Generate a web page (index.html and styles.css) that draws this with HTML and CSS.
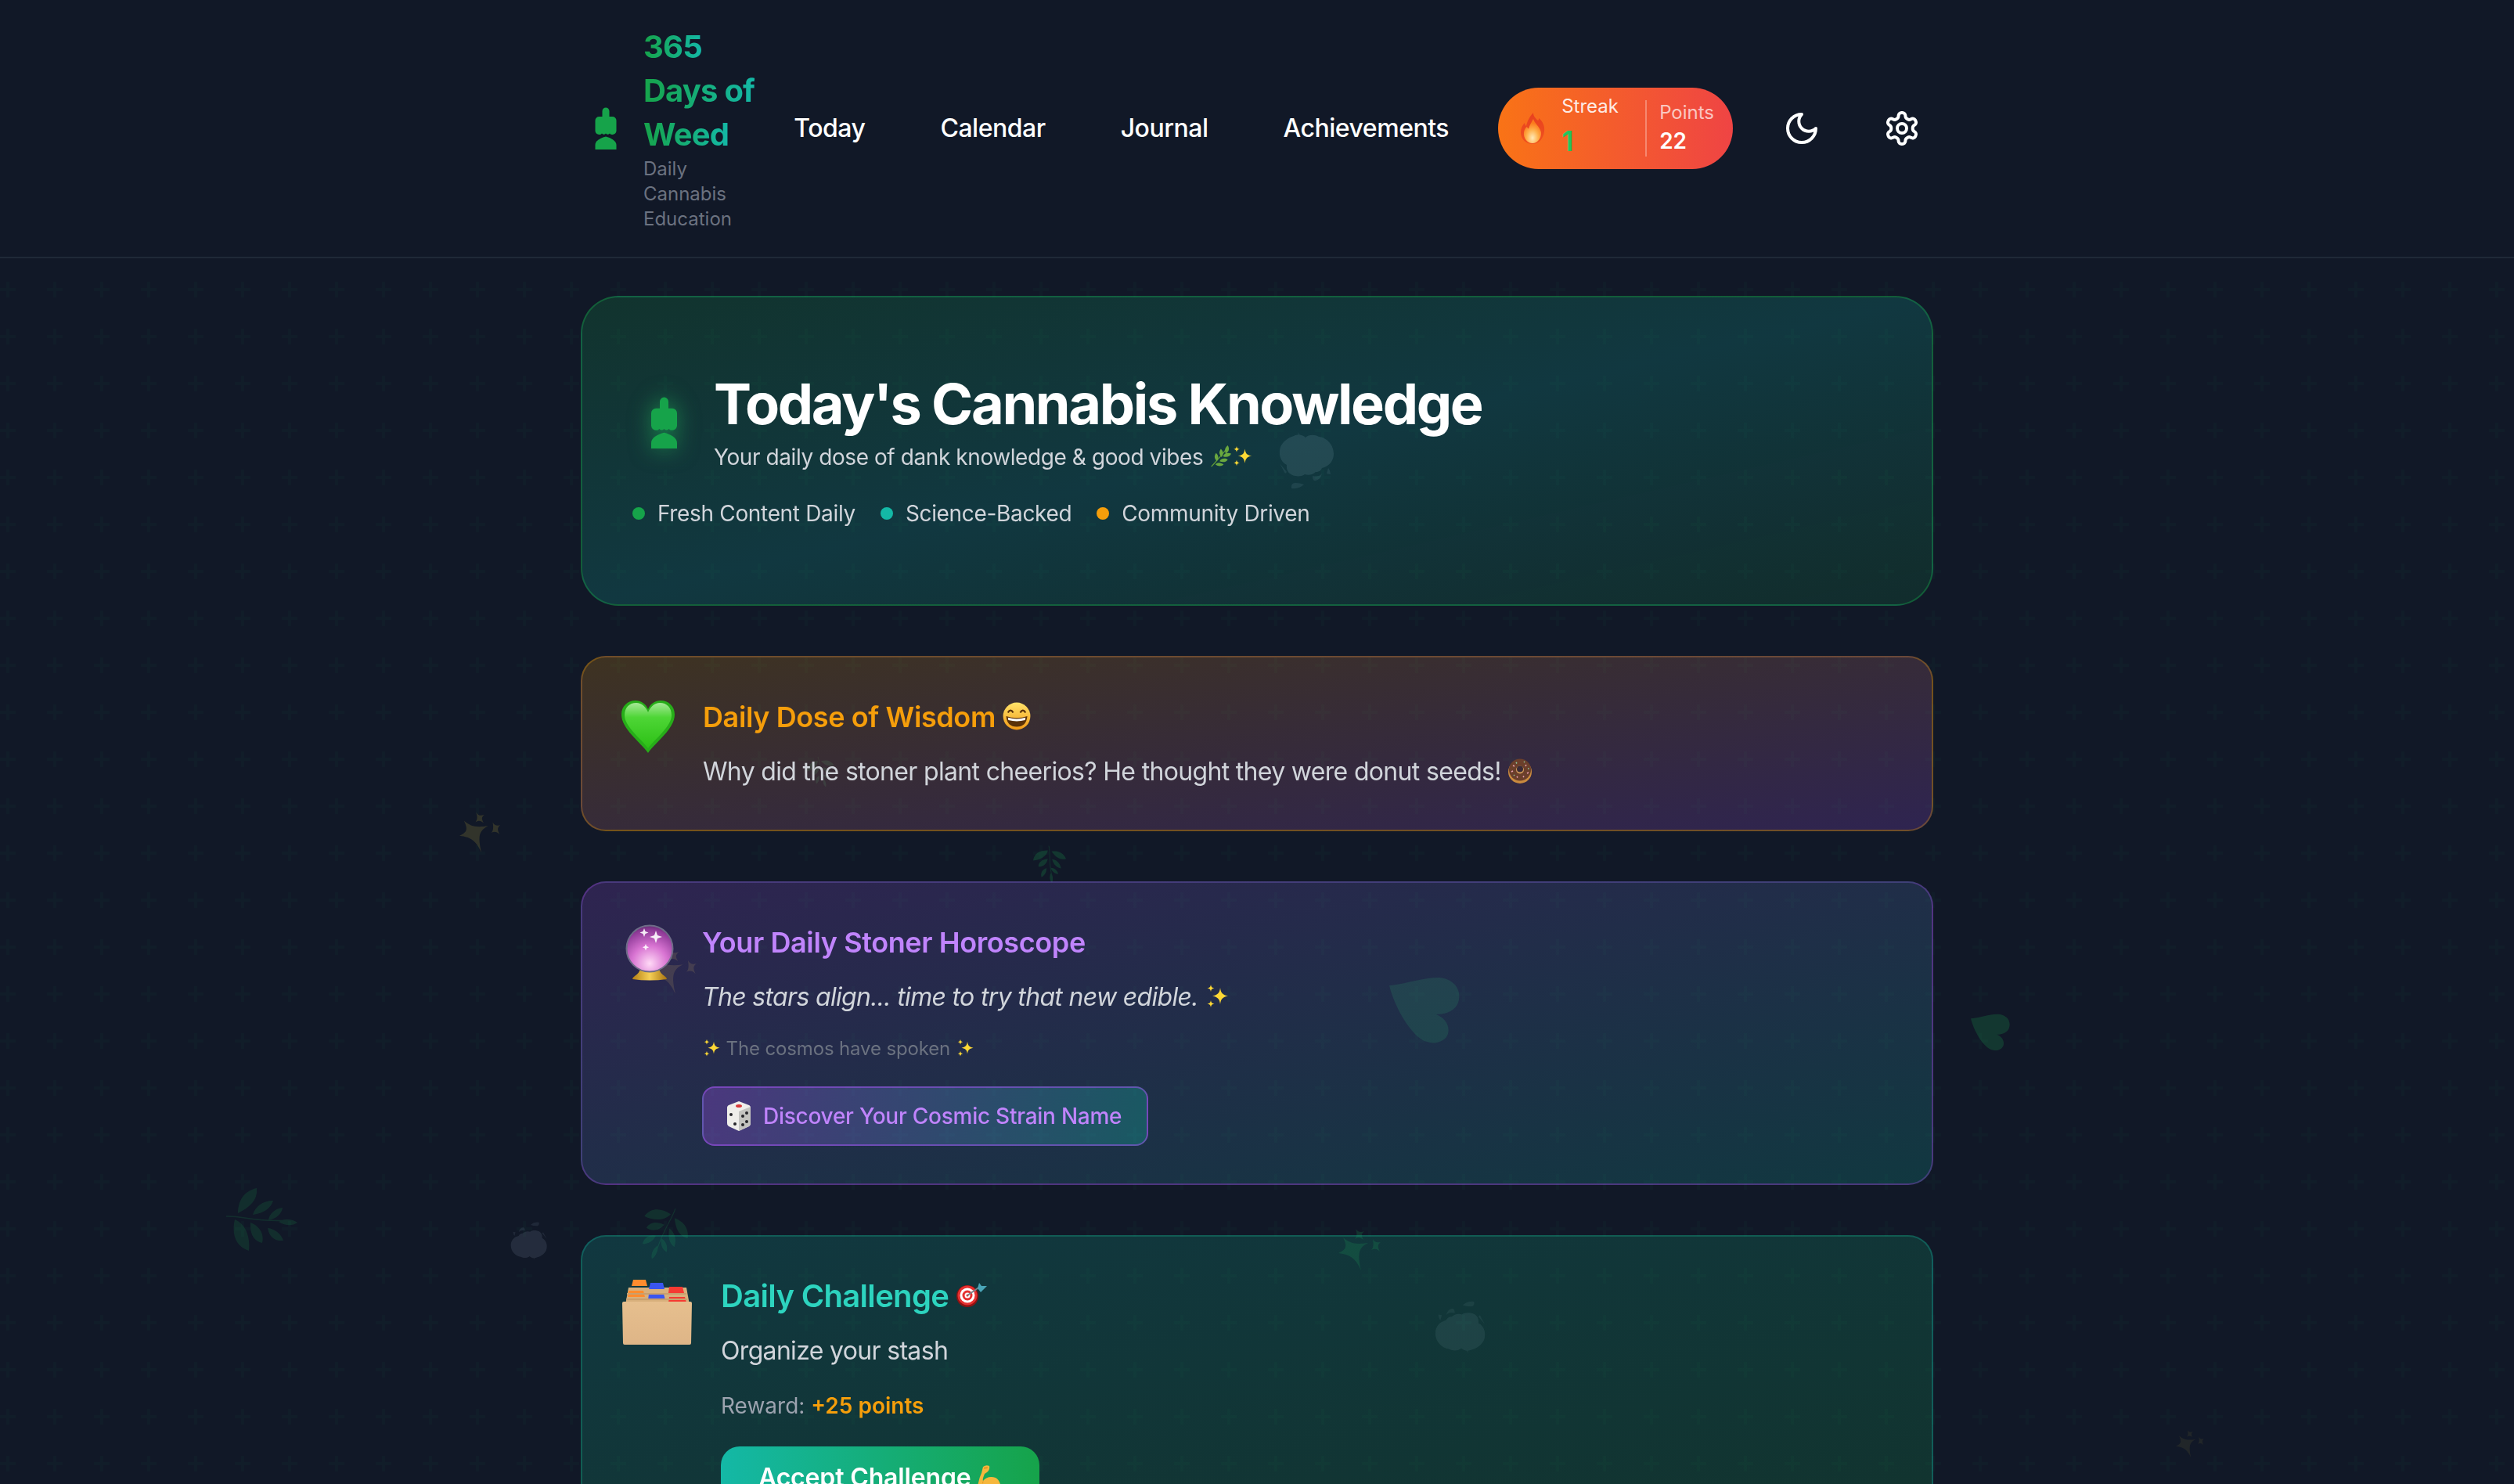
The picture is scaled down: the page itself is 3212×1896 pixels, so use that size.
FILE: index.html
```html
<!DOCTYPE html>
<html lang="en">
<head>
  <meta charset="UTF-8" />
  <meta name="viewport" content="width=device-width, initial-scale=1.0"/>
  <title>365 Days of Weed</title>
  <link rel="stylesheet" href="styles.css">
</head>
<body>
  <!-- shared icons -->
  <svg class="sprite" aria-hidden="true">
    <defs>
      <linearGradient id="gFlame" x1="0" y1="0" x2="0" y2="1"><stop offset="0" stop-color="#e8401f"/><stop offset="1" stop-color="#f0521f"/></linearGradient>
      <radialGradient id="gFlameIn" cx=".5" cy=".78" r=".62"><stop offset="0" stop-color="#ffe9b8"/><stop offset=".55" stop-color="#ffb04a"/><stop offset="1" stop-color="#fb7a1c"/></radialGradient>
      <linearGradient id="gHeart" x1="0" y1="0" x2="0" y2="1"><stop offset="0" stop-color="#a5e896"/><stop offset=".32" stop-color="#4ed636"/><stop offset="1" stop-color="#2cc015"/></linearGradient>
      <linearGradient id="gGrin" x1="0" y1="0" x2="0" y2="1"><stop offset="0" stop-color="#ffe36a"/><stop offset="1" stop-color="#f29a16"/></linearGradient>
      <radialGradient id="gBall" cx=".5" cy=".82" r=".85"><stop offset="0" stop-color="#ffd9f6"/><stop offset=".45" stop-color="#d874d2"/><stop offset=".85" stop-color="#8f3a98"/><stop offset="1" stop-color="#5c2a6a"/></radialGradient>
      <linearGradient id="gGold" x1="0" y1="0" x2="1" y2="0"><stop offset="0" stop-color="#b57f14"/><stop offset=".5" stop-color="#f5cf56"/><stop offset="1" stop-color="#a87410"/></linearGradient>
      <linearGradient id="gBox" x1="0" y1="0" x2="0" y2="1"><stop offset="0" stop-color="#e6bf8e"/><stop offset="1" stop-color="#deb587"/></linearGradient>
    </defs>

    <symbol id="logo" viewBox="0 0 27 54">
      <path d="M9 5a4.500 4.500 0 0 1 9 0v7h4a5 5 0 0 1 5 5v13a5 5 0 0 1-5 5q-2.500 0-3.500-1.500q-2.500 2.500-5 0q-2.500 2.500-5 0q-1 1.500-3.500 1.500a5 5 0 0 1-5-5V17a5 5 0 0 1 5-5h4z"/>
      <path d="M0 54V48C0 43 7 39 13.500 37.500C20 39 27 43 27 48V54z"/>
    </symbol>

    <symbol id="flame" viewBox="0 0 32 40">
      <path fill="url(#gFlame)" d="M17 0c0 5 3 7 6 10 1-1 1-2 1-3 5 4 8 10 7 17-1 9-7 16-15 16S1 34 1 25c0-5 2-9 5-12 0 2 1 3 2 4C9 11 13 4 17 0z"/>
      <path fill="url(#gFlameIn)" d="M17 8c1 5 8 9 10 17 .5 8-5 14-11 14S4 33 5 25c.5-3 2-6 4-7 .5 1.500 1 2 2 2.500C12 16 15 12 17 8z"/>
    </symbol>

    <symbol id="heart" viewBox="0 0 68 67" preserveAspectRatio="xMinYMin meet">
      <path fill="#27ad19" d="M34 67C24 53 0 36 0 18 0 7 8 0 18 0 25 0 31 4 34 11 37 4 43 0 50 0 60 0 68 7 68 18 68 36 44 53 34 67z"/>
      <path fill="url(#gHeart)" d="M34 61C25 49 4 33 4 19 4 9 10 3 19 3 26 3 31 8 34 15 37 8 42 3 49 3 58 3 64 9 64 19 64 33 43 49 34 61z"/>
    </symbol>

    <symbol id="grin" viewBox="0 0 32 32">
      <circle cx="16" cy="16" r="15.500" fill="url(#gGrin)"/>
      <path d="M6 12q3-5 6 0M20 12q3-5 6 0" fill="none" stroke="#5b3208" stroke-width="2"/>
      <path d="M4 16q12 4 24 0q-1 12-12 12T4 16z" fill="#5b3208"/>
      <path d="M6 17.500q10 3 20 0l-.5 3q-9.500 2.500-19 0z" fill="#fff"/>
    </symbol>

    <symbol id="donut" viewBox="0 0 32 32">
      <circle cx="16" cy="17" r="15" fill="#c98a3e"/>
      <circle cx="16" cy="14.500" r="14" fill="#6b3f2b"/>
      <circle cx="16" cy="14.500" r="5" fill="#d19a58"/>
      <circle cx="16" cy="13.500" r="4" fill="#3a2a36"/>
      <path d="M7 9l2 1M24 8l-1 2M5 17l2-1M25 19l2-1M12 23l1 1.500M20 24l1-1.500" stroke="#e8a0b0" stroke-width="1.500"/>
      <path d="M11 5l1 1.500M21 4l1 1M26 13l1.500 0M8 21l1 1" stroke="#8fc9a0" stroke-width="1.500"/>
    </symbol>

    <symbol id="ball" viewBox="0 0 62 72" preserveAspectRatio="xMinYMin meet">
      <path d="M9 70q0-2 3-4 6-4 7-9h24q1 5 7 9 3 2 3 4-22 3-44 0z" fill="url(#gGold)"/>
      <circle cx="31" cy="31" r="29.500" fill="url(#gBall)" stroke="#6e6c88" stroke-width="2"/>
      <path d="M24 5l1.500 4 4 1.500-4 1.500-1.500 4-1.500-4-4-1.500 4-1.500zM39 8l2 6 6 2-6 2-2 6-2-6-6-2 6-2zM26 25l1.200 3 3 1.200-3 1.200-1.200 3-1.200-3-3-1.200 3-1.200z" fill="#fff" opacity=".9"/>
    </symbol>

    <symbol id="sparkles" viewBox="0 0 32 32">
      <path fill="#fdd835" d="M20 5c1 7 3 9 10 10.500-7 1.500-9 3.500-10 10.500-1-7-3-9-10-10.500C17 14 19 12 20 5z"/>
      <path fill="#fdd835" d="M8 1c.5 3 1.500 4 4.500 4.500C9.500 6 8.500 7 8 10c-.5-3-1.500-4-4.500-4.500C6.500 5 7.500 4 8 1zM8 21c.5 3 1.500 4 4.500 4.500-3 .5-4 1.500-4.500 4.500-.5-3-1.500-4-4.500-4.500C6.500 25 7.500 24 8 21z"/>
    </symbol>

    <symbol id="herb" viewBox="0 0 32 32">
      <path d="M3 31C10 24 18 14 27 3" fill="none" stroke="#5f9c38" stroke-width="1.500"/>
      <path fill="#6aa83f" d="M27 0c3 5 2 9-3 12-2-5-1-9 3-12zM17 5c4 4 4 8 1 12-4-4-4-8-1-12zM10 11c4 4 4 8 1 12-4-4-4-8-1-12zM32 12c-2 5-7 6-12 4 2-5 7-6 12-4zM27 21c-3 4-8 4-12 2 3-4 8-5 12-2zM21 28c-3 3-8 3-12 0 3-4 8-3 12 0z"/>
    </symbol>

    <symbol id="dice" viewBox="0 0 30 40">
      <path fill="#efeeea" d="M15 1l13 5c1 .5 2 1.500 2 3v20c0 2-1 3-2 4l-13 6-13-6c-1-1-2-2-2-4V9c0-1.500 1-2.500 2-3z"/>
      <path fill="#c4c4c0" d="M15 14l15-6v21c0 2-1 3-2 4l-13 6z"/>
      <ellipse cx="15" cy="7" rx="4" ry="2" fill="#d83a3a"/>
      <g fill="#26262a"><circle cx="5" cy="18" r="2"/><circle cx="10" cy="30" r="2"/><circle cx="20" cy="20" r="2"/><circle cx="25" cy="16" r="2"/><circle cx="20" cy="31" r="2"/><circle cx="25" cy="27" r="2"/></g>
    </symbol>

    <symbol id="box" viewBox="0 0 89 83" preserveAspectRatio="xMinYMin meet">
      <path fill="#d8b07c" d="M8 10h74l4 22H4z"/>
      <path fill="#ff8c2e" d="M14 0h16l2 8H12zM8 14h19l2 8H7z"/>
      <path fill="#3a56f0" d="M36 4h16l2 8H34zM34 18h19l2 8H33z"/>
      <path fill="#f53a32" d="M60 9h17l2 8H59zM60 22h20l2 7H59z"/>
      <path fill="#c9a06e" d="M6 17h76v2H6zM5 24h78v2H5z"/>
      <path fill="url(#gBox)" d="M2 28h85a2 2 0 0 1 2 2l-1 51a2 2 0 0 1-2 2H3a2 2 0 0 1-2-2L0 30a2 2 0 0 1 2-2z"/>
    </symbol>

    <symbol id="dart" viewBox="0 0 40 32" preserveAspectRatio="xMinYMin meet">
      <circle cx="14" cy="18" r="14" fill="#8e1212"/>
      <circle cx="14" cy="17" r="12.500" fill="#e53030"/>
      <circle cx="14" cy="17" r="9.500" fill="#fff"/>
      <circle cx="14" cy="17" r="6.500" fill="#e53030"/>
      <circle cx="14" cy="17" r="3.500" fill="#fff"/>
      <circle cx="14" cy="17" r="1.500" fill="#e53030"/>
      <path d="M14 17L30 6" stroke="#7a8288" stroke-width="2"/>
      <path d="M27 8l2-7 3 4 7 0-5 5-3 3z" fill="#4aa5b8"/>
    </symbol>

    <symbol id="muscle" viewBox="0 0 32 40">
      <path fill="#f6b73c" d="M8 2Q12-1 16 1q1 5-3 8l-3 2q-3 7-2 9 6-7 16-4 8 4 8 24H0Q1 20 6 10z"/>
      <path fill="#d98c1e" d="M9 3l5-.5-.5 1.500-4.500.5zM8 20q-1 2-.5 4l1-3z"/>
    </symbol>

    <!-- faint shapes for the floating layer -->
    <symbol id="fHerb" viewBox="0 0 92 80">
      <path d="M1 36c20-1 40 8 78 5" fill="none" stroke="currentColor" stroke-width="1.500"/>
      <path fill="currentColor" d="M40 0c1 12-4 22-24 32 0-14 6-28 24-32zM61 16c-3 10-12 16-26 18 3-10 12-18 26-18zM73 25c-1 8-8 14-18 16 1-8 8-15 18-16zM92 44c-6 4-14 5-24-1 8-4 17-4 24 1zM30 80C12 74 8 58 12 40c14 6 20 22 18 40zM47 70c-10-2-16-10-15-26 11 4 18 14 15 26zM74 67c-10 1-18-4-20-16 9 1 17 7 20 16z"/>
    </symbol>
    <symbol id="fSpark" viewBox="0 0 60 56">
      <path fill="currentColor" d="M6 12c9 8 16 9 32 7-12 6-14 13-9 35-7-15-13-20-29-22 11-5 11-9 6-20zM22 1c3 4 6 5 11 3-4 4-4 5-1 11-4-3-6-4-11-1 3-4 3-7 1-13zM44 14c2 4 5 5 10 4-4 3-4 6-1 12-4-4-7-4-11-2 3-3 3-7 2-14z"/>
    </symbol>
    <symbol id="fCloud" viewBox="0 0 72 74">
      <path fill="currentColor" d="M20 5c6-3 12-1 15 2 4-4 12-4 17-1 10 1 19 10 19 22 0 9-6 16-15 18-1 3-4 5-8 5-3 3-9 5-14 3-2 2-8 3-12 2-8-1-12-7-11-14C3 38 0 28 3 19 6 12 13 7 20 5z"/>
      <path fill="currentColor" d="M25 0l5 7-3 1zM2 40l9 11-2 2zM44 56q8 2 12-3-2 8-8 9-4 1-4-6zM64 46q2 2 3 8l-5-1zM17 72q-1-7 5-7 6 0 11 2-6 6-16 5z" opacity=".8"/>
    </symbol>
    <symbol id="fHeart" viewBox="0 0 90 84">
      <path fill="currentColor" d="M0 10c18-1 42-10 62-10 18 0 32 14 26 32-3 9-14 15-28 15 10 4 18 13 15 25-3 9-15 14-27 10C28 76 6 36 0 10z"/>
    </symbol>
  </svg>

  <!-- floating background emoji -->
  <div class="floaters" aria-hidden="true">
    <svg class="fl f-cloud-a"><use href="#fCloud"/></svg>
    <svg class="fl f-spark-a"><use href="#fSpark"/></svg>
    <svg class="fl f-herb-a"><use href="#fHerb"/></svg>
    <svg class="fl f-cloud-b"><use href="#fCloud"/></svg>
    <svg class="fl f-herb-b"><use href="#fHerb"/></svg>
    <svg class="fl f-herb-c"><use href="#fHerb"/></svg>
    <svg class="fl f-spark-b"><use href="#fSpark"/></svg>
    <svg class="fl f-heart-a"><use href="#fHeart"/></svg>
    <svg class="fl f-heart-b"><use href="#fHeart"/></svg>
    <svg class="fl f-herb-d"><use href="#fHerb"/></svg>
    <svg class="fl f-spark-c"><use href="#fSpark"/></svg>
    <svg class="fl f-cloud-c"><use href="#fCloud"/></svg>
    <svg class="fl f-spark-d"><use href="#fSpark"/></svg>
  </div>

  <header class="topbar">
    <div class="topbar-inner">
      <a class="brand">
        <svg class="brand-icon"><use href="#logo"/></svg>
        <div>
          <div class="brand-title"><span>365<br>Days of<br>Weed</span></div>
          <div class="brand-sub">Daily<br>Cannabis<br>Education</div>
        </div>
      </a>
      <nav class="nav">
        <a>Today</a>
        <a>Calendar</a>
        <a>Journal</a>
        <a>Achievements</a>
      </nav>
      <div class="stats">
        <svg class="flame"><use href="#flame"/></svg>
        <div class="stat stat-streak">
          <div class="stat-label">Streak</div>
          <div class="stat-num">1</div>
        </div>
        <div class="stat stat-points">
          <div class="stat-label">Points</div>
          <div class="stat-num">22</div>
        </div>
      </div>
      <button class="icon-btn">
        <svg viewBox="0 0 24 24"><path d="M12 3a6 6 0 0 0 9 9 9 9 0 1 1-9-9Z"/></svg>
      </button>
      <button class="icon-btn">
        <svg viewBox="0 0 24 24"><path d="M12.220 2h-.44a2 2 0 0 0-2 2v.18a2 2 0 0 1-1 1.730l-.43.25a2 2 0 0 1-2 0l-.15-.08a2 2 0 0 0-2.730.73l-.22.38a2 2 0 0 0 .73 2.730l.15.1a2 2 0 0 1 1 1.720v.51a2 2 0 0 1-1 1.740l-.15.09a2 2 0 0 0-.73 2.730l.22.38a2 2 0 0 0 2.730.73l.15-.08a2 2 0 0 1 2 0l.43.25a2 2 0 0 1 1 1.730V20a2 2 0 0 0 2 2h.44a2 2 0 0 0 2-2v-.18a2 2 0 0 1 1-1.730l.43-.25a2 2 0 0 1 2 0l.15.08a2 2 0 0 0 2.730-.73l.22-.39a2 2 0 0 0-.73-2.730l-.15-.08a2 2 0 0 1-1-1.740v-.5a2 2 0 0 1 1-1.740l.15-.09a2 2 0 0 0 .73-2.730l-.22-.38a2 2 0 0 0-2.730-.73l-.15.08a2 2 0 0 1-2 0l-.43-.25a2 2 0 0 1-1-1.730V4a2 2 0 0 0-2-2z"/><circle cx="12" cy="12" r="3"/></svg>
      </button>
    </div>
  </header>

  <main class="page">
    <section class="hero">
      <div class="hero-top">
        <div class="hero-icon"><svg><use href="#logo"/></svg></div>
        <div>
          <h1>Today's Cannabis Knowledge</h1>
          <p class="hero-sub">Your daily dose of dank knowledge &amp; good vibes <svg class="emo"><use href="#herb"/></svg><svg class="emo"><use href="#sparkles"/></svg></p>
        </div>
      </div>
      <div class="hero-tags">
        <span class="tag"><i class="dot dot-green"></i>Fresh Content Daily</span>
        <span class="tag"><i class="dot dot-teal"></i>Science-Backed</span>
        <span class="tag"><i class="dot dot-amber"></i>Community Driven</span>
      </div>
    </section>

    <section class="card card-wisdom">
      <svg class="card-icon icon-heart"><use href="#heart"/></svg>
      <div class="card-body">
        <h3>Daily Dose of Wisdom <svg class="emo"><use href="#grin"/></svg></h3>
        <p>Why did the stoner plant cheerios? He thought they were donut seeds! <svg class="emo"><use href="#donut"/></svg></p>
      </div>
    </section>

    <section class="card card-horoscope">
      <svg class="card-icon icon-ball"><use href="#ball"/></svg>
      <div class="card-body">
        <h3>Your Daily Stoner Horoscope</h3>
        <p><em>The stars align... time to try that new edible. <svg class="emo"><use href="#sparkles"/></svg></em></p>
        <div class="note"><svg class="emo"><use href="#sparkles"/></svg> The cosmos have spoken <svg class="emo"><use href="#sparkles"/></svg></div>
        <button class="btn-cosmic"><svg class="dice"><use href="#dice"/></svg>Discover Your Cosmic Strain Name</button>
      </div>
    </section>

    <section class="card card-challenge">
      <svg class="card-icon icon-box"><use href="#box"/></svg>
      <div class="card-body">
        <h3>Daily Challenge <svg class="emo dart"><use href="#dart"/></svg></h3>
        <p>Organize your stash</p>
        <div class="reward">Reward: <strong>+25 points</strong></div>
        <button class="btn-accept">Accept Challenge <svg class="muscle"><use href="#muscle"/></svg></button>
      </div>
    </section>
  </main>
</body>
</html>
```

FILE: styles.css
```css
* { box-sizing: border-box; }
html, body { height: 100%; overflow: hidden; }
body {
  margin: 0;
  font-family: Inter, "Noto Sans", sans-serif;
  color: #fff;
  background-color: #111827;
  background-image: url("data:image/svg+xml,%3Csvg width='60' height='60' viewBox='0 0 60 60' xmlns='http://www.w3.org/2000/svg'%3E%3Cpath fill='%2316a34a' fill-opacity='.035' d='M36 34v-4h-2v4h-4v2h4v4h2v-4h4v-2h-4zm0-30V0h-2v4h-4v2h4v4h2V6h4V4h-4zM6 34v-4H4v4H0v2h4v4h2v-4h4v-2H6zM6 4V0H4v4H0v2h4v4h2V6h4V4H6z'/%3E%3C/svg%3E");
  background-size: 120px 120px;
}
.sprite { position: absolute; width: 0; height: 0; }

/* floating layer */
.floaters { position: fixed; inset: 0; }
.fl { position: absolute; }
.f-cloud-a { left: 1633px; top: 552px; width: 72px; height: 74px; color: #94a3b8; opacity: .17; }
.f-spark-a { left: 587px; top: 1036px; width: 58px; height: 56px; color: #fde047; opacity: .14; }
.f-herb-a { left: 288px; top: 1518px; width: 92px; height: 80px; color: #22c55e; opacity: .13; }
.f-cloud-b { left: 652px; top: 1558px; width: 48px; height: 54px; color: #94a3b8; opacity: .15; transform: rotate(180deg); }
.f-herb-b { left: 1318px; top: 1080px; width: 48px; height: 48px; color: #22c55e; opacity: .18; transform: rotate(80deg); }
.f-herb-c { left: 1030px; top: 960px; width: 40px; height: 52px; color: #4ade80; opacity: .12; transform: rotate(70deg); }
.f-spark-b { left: 826px; top: 1212px; width: 76px; height: 60px; color: #fde047; opacity: .14; }
.f-heart-a { left: 1775px; top: 1249px; width: 90px; height: 84px; color: #22c55e; opacity: .15; }
.f-heart-b { left: 2518px; top: 1295px; width: 50px; height: 48px; color: #22c55e; opacity: .18; }
.f-herb-d { left: 806px; top: 1545px; width: 84px; height: 62px; color: #22c55e; opacity: .14; transform: rotate(110deg); }
.f-spark-c { left: 1710px; top: 1567px; width: 60px; height: 60px; color: #22c55e; opacity: .16; }
.f-cloud-c { left: 1833px; top: 1660px; width: 66px; height: 70px; color: #94a3b8; opacity: .13; transform: rotate(180deg); }
.f-spark-d { left: 2780px; top: 1825px; width: 40px; height: 40px; color: #fde047; opacity: .07; }

/* header */
.topbar {
  position: relative;
  background: #111827;
  border-bottom: 2px solid #1f2937;
}
.topbar-inner {
  max-width: 1792px;
  margin: 0 auto;
  padding: 16px 32px;
  display: flex;
  align-items: center;
}
.brand { display: flex; align-items: center; gap: 32px; padding: 16px; }
.brand-icon { width: 32px; height: 54px; fill: #16a34a; }
.brand-title { font-size: 40px; line-height: 56px; font-weight: 700; letter-spacing: -.02em; }
.brand-title span {
  background: linear-gradient(to right, #16a34a, #14b8a6);
  -webkit-background-clip: text;
  background-clip: text;
  color: transparent;
  -webkit-box-decoration-break: clone;
  box-decoration-break: clone;
}
.brand-sub { font-size: 24px; line-height: 32px; color: #6b7280; }
.nav { display: flex; gap: 32px; margin-left: 2px; letter-spacing: -.03em; }
.nav a { padding: 16px 32px; font-size: 32px; line-height: 48px; font-weight: 500; }
.stats {
  margin-left: auto;
  height: 104px;
  display: flex;
  align-items: center;
  padding: 8px 24px 8px 28px;
  border-radius: 52px;
  background: linear-gradient(to right, #f97316, #ef4444);
}
.flame { width: 32px; height: 40px; margin-right: 21px; }
.stat-label { font-size: 24px; line-height: 32px; }
.stat-num { font-weight: 600; }
.stat-streak { width: 107px; }
.stat-streak .stat-label { color: rgba(255, 255, 255, .9); }
.stat-streak .stat-num { font-size: 36px; line-height: 56px; color: #22c55e; }
.stat-points { border-left: 2px solid rgba(255, 255, 255, .3); padding-left: 16px; }
.stat-points .stat-label { color: rgba(255, 255, 255, .7); }
.stat-points .stat-num { font-size: 28px; line-height: 40px; }
.icon-btn {
  margin-left: 48px;
  padding: 16px;
  width: 80px;
  height: 80px;
  background: none;
  border: 0;
}
.icon-btn svg {
  display: block;
  width: 48px;
  height: 48px;
  fill: none;
  stroke: #fff;
  stroke-width: 2;
  stroke-linecap: round;
  stroke-linejoin: round;
}

/* main column */
.page {
  position: relative;
  max-width: 1792px;
  margin: 0 auto;
  padding: 48px 32px;
  display: flex;
  flex-direction: column;
  gap: 64px;
}
.emo { display: inline-block; width: 1em; height: 1em; vertical-align: -.12em; }

.hero {
  padding: 96px 64px;
  border: 2px solid rgba(22, 163, 74, .4);
  border-radius: 48px;
  background: linear-gradient(to bottom right, rgba(22, 163, 74, .2), rgba(20, 184, 166, .2) 50%, rgba(22, 163, 74, .15));
}
.hero-top { display: flex; align-items: center; gap: 24px; }
.hero-icon { width: 80px; display: flex; justify-content: center; }
.hero-icon svg { width: 33px; height: 66px; fill: #16a34a; filter: drop-shadow(0 0 14px rgba(34, 197, 94, .55)); }
.hero h1 { margin: 0; font-size: 72px; line-height: 80px; font-weight: 700; letter-spacing: -.033em; }
.hero-sub { margin: 8px 0 0; font-size: 28px; line-height: 40px; color: #d1d5db; letter-spacing: -.015em; }
.hero-tags { display: flex; gap: 32px; margin-top: 32px; font-size: 28px; line-height: 40px; color: #d1d5db; letter-spacing: -.012em; }
.tag { display: flex; align-items: center; gap: 16px; }
.dot { width: 16px; height: 16px; border-radius: 50%; }
.dot-green { background: #16a34a; }
.dot-teal { background: #14b8a6; }
.dot-amber { background: #f59e0b; }

.card {
  display: flex;
  gap: 24px;
  padding: 48px;
  border: 2px solid;
  border-radius: 32px;
}
.card-icon { flex: none; }
.icon-heart { width: 68px; height: 67px; margin: 7px 12px 0 2px; }
.icon-ball { width: 62px; height: 72px; margin: 5px 12px 0 7px; }
.icon-box { width: 89px; height: 83px; margin: 7px 13px 0 3px; }
.card-body { flex: 1; }
.card h3 { margin: 0 0 16px; font-size: 36px; line-height: 56px; font-weight: 600; letter-spacing: -.011em; }
.card p { margin: 0; font-size: 32px; line-height: 52px; color: #d1d5db; letter-spacing: -.021em; }
.card-wisdom {
  border-color: rgba(245, 158, 11, .3);
  background: linear-gradient(to bottom right, rgba(245, 158, 11, .2), rgba(168, 85, 247, .2));
}
.card-wisdom h3 { color: #f59e0b; }
.card-horoscope {
  border-color: rgba(168, 85, 247, .3);
  background: linear-gradient(to bottom right, rgba(168, 85, 247, .2), rgba(20, 184, 166, .2));
}
.card-horoscope h3 { color: #c084fc; }
.note { margin-top: 24px; font-size: 24px; line-height: 32px; color: #6b7280; letter-spacing: -.006em; }
.btn-cosmic {
  display: flex;
  align-items: center;
  gap: 16px;
  margin-top: 32px;
  padding: 16px 32px;
  border: 2px solid rgba(168, 85, 247, .5);
  border-radius: 16px;
  background: linear-gradient(to right, rgba(168, 85, 247, .3), rgba(20, 184, 166, .3));
  font: 500 28px/40px Inter, sans-serif;
  letter-spacing: -.009em;
  color: #c084fc;
}
.dice { width: 30px; height: 40px; margin-left: -2px; }
.card-challenge {
  border-color: rgba(20, 184, 166, .3);
  background: linear-gradient(to bottom right, rgba(20, 184, 166, .2), rgba(22, 163, 74, .2));
}
.card-challenge h3 { color: #2dd4bf; font-size: 40px; letter-spacing: -.017em; }
.dart { width: 1em; height: .8em; vertical-align: 0; }
.reward { margin-top: 24px; font-size: 28px; line-height: 40px; color: #9ca3af; }
.reward strong { font-weight: 600; color: #f59e0b; }
.btn-accept {
  margin-top: 32px;
  padding: 16px 48px;
  border: 0;
  border-radius: 24px;
  background: linear-gradient(to right, #14b8a6, #16a34a);
  font: 600 32px/48px Inter, sans-serif;
  letter-spacing: -.005em;
  color: #fff;
}
.muscle { width: 32px; height: 40px; vertical-align: -13px; }
```
